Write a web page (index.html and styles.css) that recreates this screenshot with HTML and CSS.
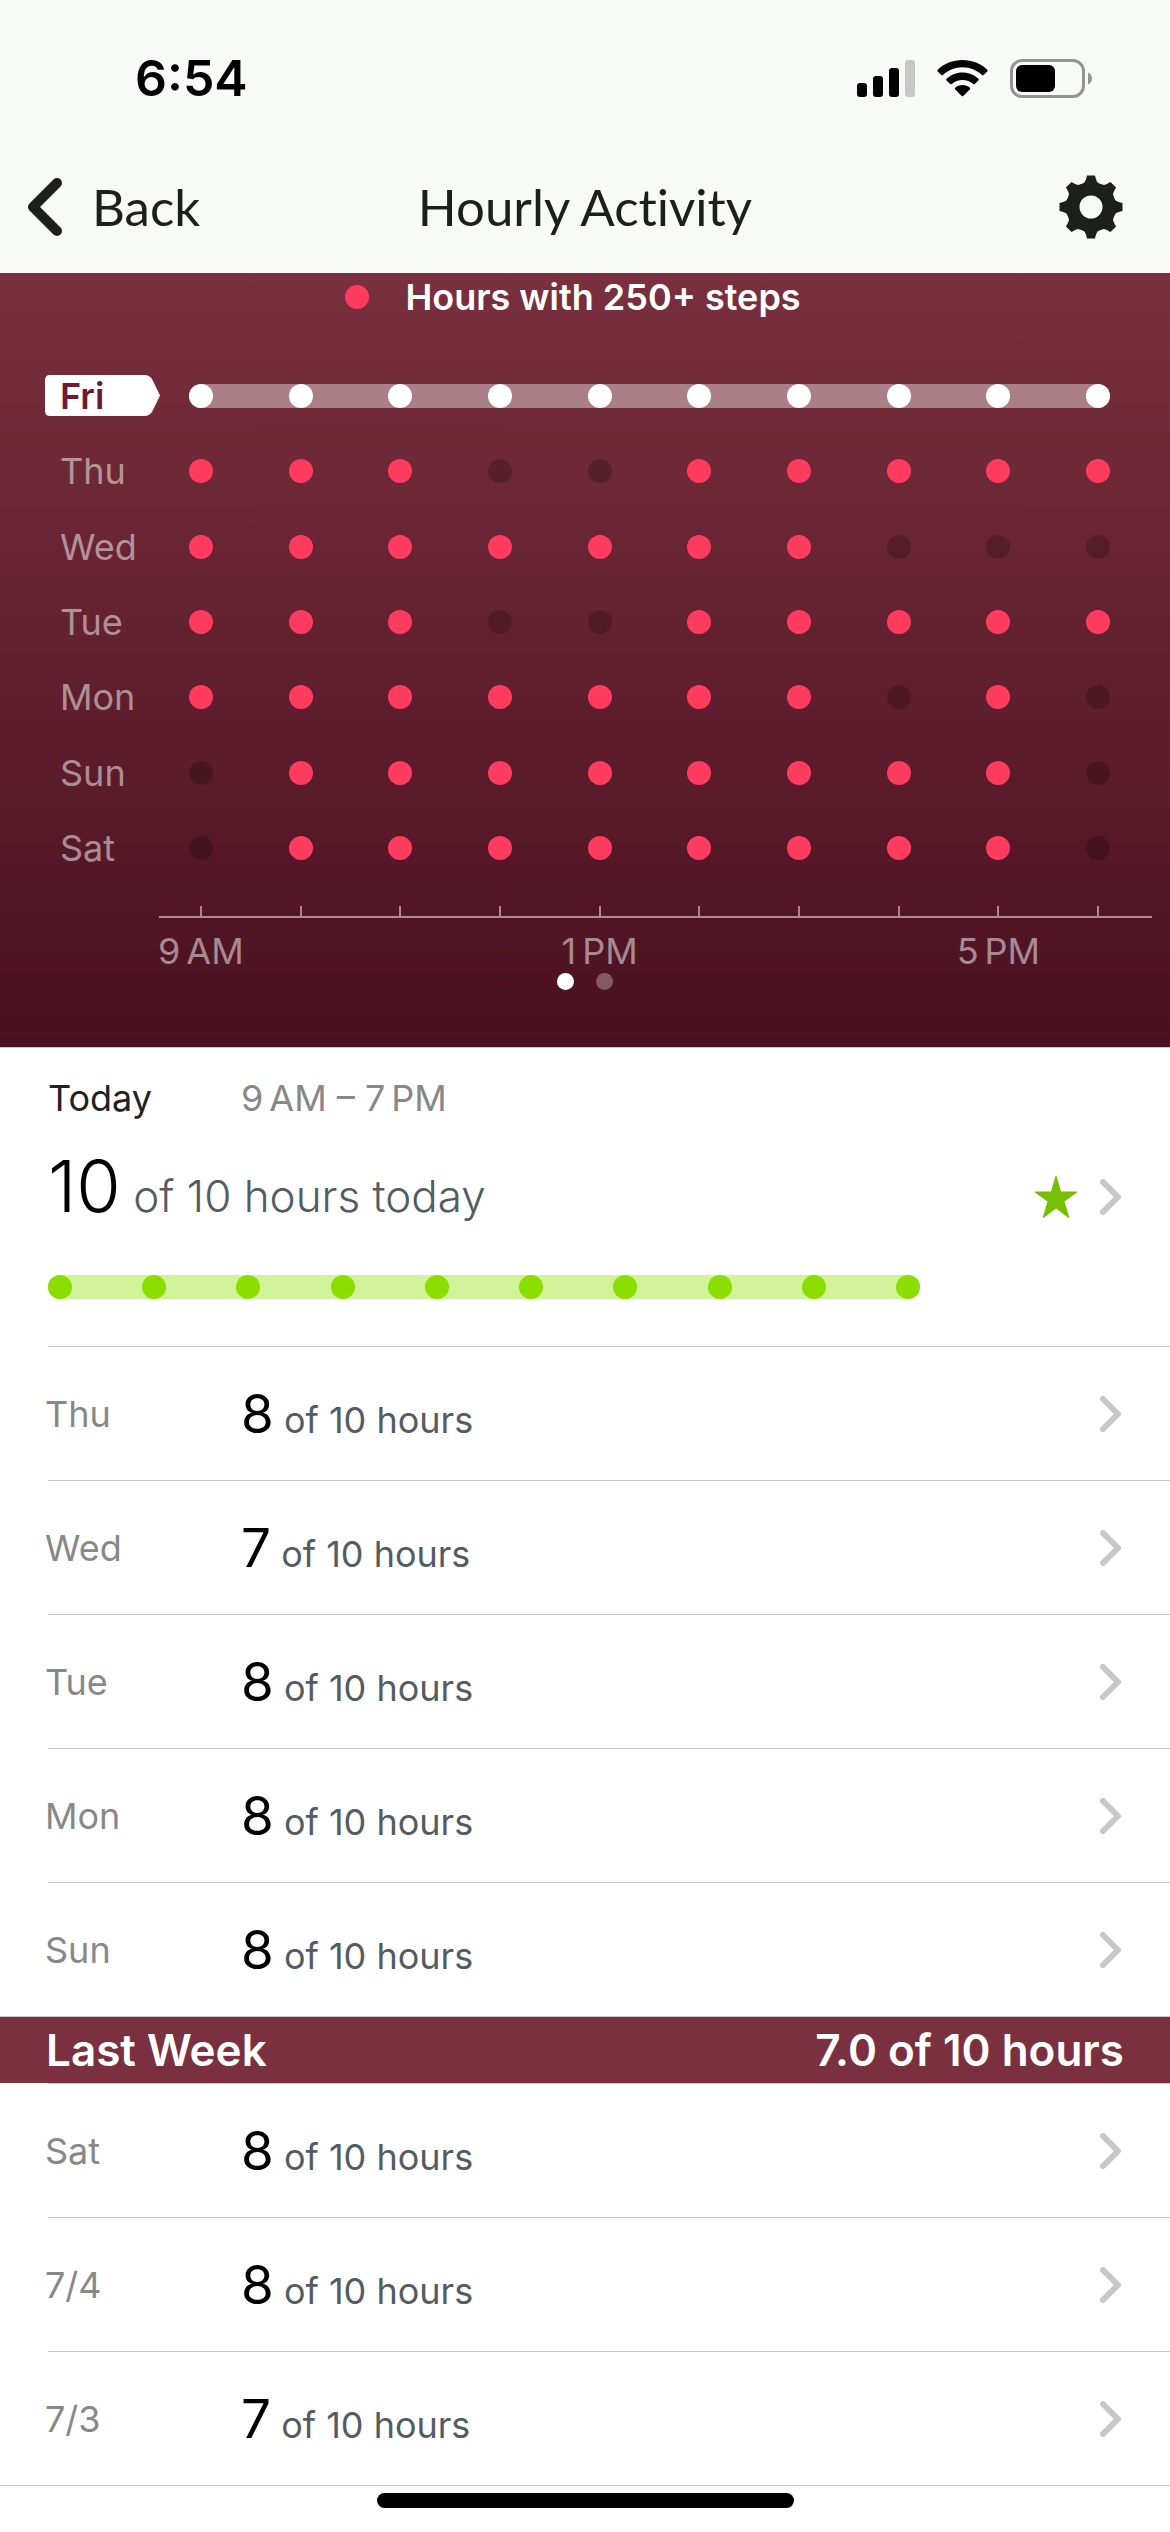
FILE: index.html
```html
<!DOCTYPE html>
<html lang="en">
<head>
    <meta charset="UTF-8">
    <meta name="viewport" content="width=device-width, initial-scale=1.0">
    <title>Hourly Activity</title>
    <link rel="stylesheet" href="styles.css">
</head>
<body>
    <svg width="0" height="0" class="defs">
        <symbol id="chevron" viewBox="0 0 22 36">
            <path d="M3 3L18 18L3 33" fill="none" stroke="#c7c7c9" stroke-width="6" stroke-linecap="round" stroke-linejoin="round"/>
        </symbol>
    </svg>

    <header class="top">
        <div class="status">
            <span class="time">6:54</span>
            <div class="status-icons">
                <svg width="58" height="38" viewBox="0 0 58 38">
                    <rect x="0" y="24" width="10" height="14" rx="3"/>
                    <rect x="16" y="17" width="10" height="21" rx="3"/>
                    <rect x="32" y="9" width="10" height="29" rx="3"/>
                    <rect x="48" y="1" width="10" height="37" rx="3" fill="#c6c8c5"/>
                </svg>
                <svg width="51" height="38" viewBox="0 0 51 38">
                    <path d="M25.500 1C35 1 44 4.500 50.300 10.800Q51 11.600 50.300 12.400L46.600 16Q45.900 16.600 45.100 16C39.800 11 33 8.200 25.500 8.200S11.200 11 5.900 16Q5.100 16.600 4.400 16L.7 12.400Q0 11.600.7 10.800C7 4.500 16 1 25.500 1Z"/>
                    <path d="M25.500 13.500C31.700 13.500 37.300 15.900 41.500 19.800Q42.200 20.600 41.500 21.400L37.800 25Q37 25.700 36.200 25C33.300 22.400 29.600 20.900 25.500 20.900S17.700 22.400 14.800 25Q14 25.700 13.200 25L9.500 21.400Q8.800 20.600 9.500 19.800C13.700 15.900 19.300 13.500 25.500 13.500Z"/>
                    <path d="M25.500 26C28.300 26 30.900 27 32.900 28.700Q33.600 29.500 32.900 30.300L26.300 37Q25.500 37.700 24.700 37L18.100 30.300Q17.400 29.500 18.100 28.700C20.100 27 22.700 26 25.500 26Z"/>
                </svg>
                <svg width="82" height="39" viewBox="0 0 82 39">
                    <rect x="1.500" y="1.500" width="72" height="36" rx="10.500" fill="none" stroke="#949593" stroke-width="3"/>
                    <rect x="6" y="6" width="39" height="27" rx="6"/>
                    <path d="M78 13.500C80.500 14.500 82 17 82 19.500S80.500 24.500 78 25.500Z" fill="#949593"/>
                </svg>
            </div>
        </div>
        <nav class="nav">
            <a href="#" class="back">
                <svg width="35" height="58" viewBox="0 0 35 58">
                    <path d="M29 5L5 29L29 53" fill="none" stroke="#1c1f1c" stroke-width="10" stroke-linecap="round" stroke-linejoin="round"/>
                </svg>
                Back
            </a>
            <h1>Hourly Activity</h1>
            <button class="settings" aria-label="Settings">
                <svg width="64" height="64" viewBox="-32 -32 64 64" fill="#1c1f1c">
                    <circle r="18" fill="none" stroke="#1c1f1c" stroke-width="13"/>
                    <g id="teeth">
                        <path id="tooth" d="M-4-31.500H4Q5.500-25 7-24.300T11-22L8-20H-8L-11-22Q-8.500-23.600-7-24.300T-4-31.500Z"/>
                        <use href="#tooth" transform="rotate(45)"/>
                        <use href="#tooth" transform="rotate(90)"/>
                        <use href="#tooth" transform="rotate(135)"/>
                    </g>
                    <use href="#teeth" transform="rotate(180)"/>
                </svg>
            </button>
        </nav>
    </header>

    <section class="chart">
        <p class="legend"><i class="dot on"></i>Hours with 250+ steps</p>
        <div class="days">
            <div class="day current">
                <span class="label"><svg width="115" height="41" viewBox="0 0 115 41"><path d="M5 0H99Q105 0 107.500 5L115 20.500L107.500 36Q105 41 99 41H5Q0 41 0 36V5Q0 0 5 0Z" fill="#fff"/></svg><b>Fri</b></span>
                <div class="dots"><i class="dot"></i><i class="dot"></i><i class="dot"></i><i class="dot"></i><i class="dot"></i><i class="dot"></i><i class="dot"></i><i class="dot"></i><i class="dot"></i><i class="dot"></i></div>
            </div>
            <div class="day">
                <span class="label">Thu</span>
                <div class="dots"><i class="dot on"></i><i class="dot on"></i><i class="dot on"></i><i class="dot"></i><i class="dot"></i><i class="dot on"></i><i class="dot on"></i><i class="dot on"></i><i class="dot on"></i><i class="dot on"></i></div>
            </div>
            <div class="day">
                <span class="label">Wed</span>
                <div class="dots"><i class="dot on"></i><i class="dot on"></i><i class="dot on"></i><i class="dot on"></i><i class="dot on"></i><i class="dot on"></i><i class="dot on"></i><i class="dot"></i><i class="dot"></i><i class="dot"></i></div>
            </div>
            <div class="day">
                <span class="label">Tue</span>
                <div class="dots"><i class="dot on"></i><i class="dot on"></i><i class="dot on"></i><i class="dot"></i><i class="dot"></i><i class="dot on"></i><i class="dot on"></i><i class="dot on"></i><i class="dot on"></i><i class="dot on"></i></div>
            </div>
            <div class="day">
                <span class="label">Mon</span>
                <div class="dots"><i class="dot on"></i><i class="dot on"></i><i class="dot on"></i><i class="dot on"></i><i class="dot on"></i><i class="dot on"></i><i class="dot on"></i><i class="dot"></i><i class="dot on"></i><i class="dot"></i></div>
            </div>
            <div class="day">
                <span class="label">Sun</span>
                <div class="dots"><i class="dot"></i><i class="dot on"></i><i class="dot on"></i><i class="dot on"></i><i class="dot on"></i><i class="dot on"></i><i class="dot on"></i><i class="dot on"></i><i class="dot on"></i><i class="dot"></i></div>
            </div>
            <div class="day">
                <span class="label">Sat</span>
                <div class="dots"><i class="dot"></i><i class="dot on"></i><i class="dot on"></i><i class="dot on"></i><i class="dot on"></i><i class="dot on"></i><i class="dot on"></i><i class="dot on"></i><i class="dot on"></i><i class="dot"></i></div>
            </div>
        </div>
        <div class="ticks"><i></i><i></i><i></i><i></i><i></i><i></i><i></i><i></i><i></i><i></i></div>
        <div class="axis"></div>
        <div class="hours">
            <span>9&#8198;AM</span><span></span><span></span><span></span>
            <span>1&#8198;PM</span><span></span><span></span><span></span>
            <span>5&#8198;PM</span><span></span>
        </div>
        <div class="pages"><i class="active"></i><i></i></div>
    </section>

    <section class="today">
        <div class="today-head">
            <h2>Today</h2>
            <span>9&#8198;AM – 7&#8198;PM</span>
        </div>
        <a href="#" class="today-total">
            <span><strong>10</strong> of 10 hours today</span>
            <span class="today-icons">
                <svg width="42" height="42" viewBox="0 0 42 42"><path d="M20.500 0H21.500L26 15.500H42V16.500L29.500 25.500L34.500 42H33.500L21 32.500L8.500 42H7.500L12.500 25.500L0 16.500V15.500H16Z" fill="#76c000"/></svg>
                <svg width="22" height="36"><use href="#chevron"/></svg>
            </span>
        </a>
        <div class="streak"><i class="dot"></i><i class="dot"></i><i class="dot"></i><i class="dot"></i><i class="dot"></i><i class="dot"></i><i class="dot"></i><i class="dot"></i><i class="dot"></i><i class="dot"></i></div>
    </section>

    <ul class="list">
        <li><a href="#"><span class="date">Thu</span><span class="value"><strong>8</strong> of 10 hours</span><svg width="22" height="36"><use href="#chevron"/></svg></a></li>
        <li><a href="#"><span class="date">Wed</span><span class="value"><strong>7</strong> of 10 hours</span><svg width="22" height="36"><use href="#chevron"/></svg></a></li>
        <li><a href="#"><span class="date">Tue</span><span class="value"><strong>8</strong> of 10 hours</span><svg width="22" height="36"><use href="#chevron"/></svg></a></li>
        <li><a href="#"><span class="date">Mon</span><span class="value"><strong>8</strong> of 10 hours</span><svg width="22" height="36"><use href="#chevron"/></svg></a></li>
        <li><a href="#"><span class="date">Sun</span><span class="value"><strong>8</strong> of 10 hours</span><svg width="22" height="36"><use href="#chevron"/></svg></a></li>
    </ul>

    <div class="week">
        <h2>Last Week</h2>
        <span>7.0 of 10 hours</span>
    </div>

    <ul class="list">
        <li><a href="#"><span class="date">Sat</span><span class="value"><strong>8</strong> of 10 hours</span><svg width="22" height="36"><use href="#chevron"/></svg></a></li>
        <li><a href="#"><span class="date">7/4</span><span class="value"><strong>8</strong> of 10 hours</span><svg width="22" height="36"><use href="#chevron"/></svg></a></li>
        <li><a href="#"><span class="date">7/3</span><span class="value"><strong>7</strong> of 10 hours</span><svg width="22" height="36"><use href="#chevron"/></svg></a></li>
    </ul>

    <div class="home-bar"></div>
</body>
</html>
```
FILE: styles.css
```css
* { box-sizing: border-box; }
body {
    font-family: Inter, "Liberation Sans", sans-serif;
    font-size: 36px;
    line-height: 44px;
    margin: 0;
    background: #fff;
    color: #000;
}
h1, h2, p, ul { margin: 0; padding: 0; }
a { color: inherit; text-decoration: none; }
svg { display: block; flex: none; }
.defs { position: absolute; }

/* header */
.top { background: #f8faf7; color: #1c1f1c; }
.status {
    display: flex;
    justify-content: space-between;
    align-items: center;
    height: 140px;
    padding: 16px 78px 0 135px;
}
.time { font-size: 50px; font-weight: 600; color: #000; }
.status-icons { display: flex; align-items: center; gap: 22px; }
.nav {
    display: grid;
    grid-template-columns: 1fr auto 1fr;
    align-items: center;
    height: 133px;
    padding: 0 28px;
    font-family: Lato, sans-serif;
    font-size: 51px;
    font-variant-ligatures: none;
}
.back { display: flex; align-items: center; gap: 29px; }
.nav h1 { font-size: 51px; font-weight: 400; }
.settings {
    justify-self: end;
    margin-right: 19px;
    border: none;
    background: none;
    padding: 0;
}

/* chart */
.dot {
    width: 24px;
    height: 24px;
    border-radius: 50%;
    background: rgba(0, 0, 0, 0.2);
}
.dot.on { background: #ff3b60; }
.chart {
    padding: 2px 0 57px;
    background: linear-gradient(#7a303e, #4a1020);
    border-bottom: 1px solid #c8c8c8;
    color: rgba(255, 255, 255, 0.5);
}
.legend {
    display: flex;
    justify-content: center;
    align-items: center;
    gap: 36px;
    padding-right: 24px;
    color: #fff;
    font-weight: 600;
}
.days {
    display: grid;
    grid-template-rows: repeat(7, 1fr);
    height: 528px;
    margin-top: 39px;
}
.day { display: flex; align-items: center; padding: 0 60px; }
.label { width: 129px; }
.dots {
    display: flex;
    justify-content: space-between;
    flex: 1;
    border-radius: 12px;
}
.current .label { position: relative; color: #6e1a36; }
.current .label b { position: relative; font-weight: 600; }
.current .label svg { position: absolute; left: -15px; top: 1px; }
.current .dots { background: rgba(255, 255, 255, 0.4); }
.current .dot { background: #fff; }
.ticks, .hours {
    display: grid;
    grid-template-columns: repeat(10, 1fr);
    justify-items: center;
    padding: 0 22px 0 151px;
}
.ticks { margin-top: 20px; }
.ticks i { width: 2px; height: 10px; background: rgba(255, 255, 255, 0.5); }
.axis { height: 2px; margin: 0 18px 0 159px; background: rgba(255, 255, 255, 0.5); }
.hours { margin-top: 11px; white-space: nowrap; }
.pages { display: flex; justify-content: center; gap: 22px; }
.pages i {
    width: 17px;
    height: 17px;
    border-radius: 50%;
    background: rgba(255, 255, 255, 0.3);
}
.pages .active { background: #fff; }

/* today */
.today { padding: 28px 48px 47px; }
.today-head { display: flex; color: #888; }
.today-head h2 {
    width: 193px;
    font-size: 36px;
    font-weight: 400;
    color: #222;
}
.today-total {
    display: flex;
    justify-content: space-between;
    height: 84px;
    margin-top: 24px;
    font-size: 44px;
    font-weight: 300;
    color: #525c62;
}
.today-total strong {
    font-size: 72px;
    font-weight: 300;
    line-height: 84px;
    color: #000;
}
.today-icons { display: flex; align-items: center; gap: 23px; padding-top: 22px; }
.streak {
    display: flex;
    justify-content: space-between;
    margin: 47px 202px 0 0;
    border-radius: 12px;
    background: #d1f49b;
}
.streak .dot { background: #8ade00; }

/* day list */
.list { list-style: none; }
.list li { margin-left: 48px; border-top: 1px solid #c8c8c8; }
.list a { display: flex; align-items: center; height: 133px; padding-right: 48px; }
.date { width: 196px; margin-left: -3px; color: #888; }
.value { flex: 1; color: #525c62; }
.value strong {
    font-size: 53px;
    font-weight: 400;
    line-height: 64px;
    color: #000;
}
.week {
    display: flex;
    justify-content: space-between;
    padding: 11px 46px;
    border-top: 1px solid #c8c8c8;
    background: #7a303e;
    color: #fff;
    font-size: 44px;
    font-weight: 600;
}
.week h2 { font-size: 44px; font-weight: 600; }
.week + .list { border-bottom: 1px solid #c8c8c8; }
.home-bar {
    position: fixed;
    bottom: 24px;
    left: 50%;
    width: 417px;
    height: 15px;
    margin-left: -208px;
    border-radius: 8px;
    background: #000;
}
```
